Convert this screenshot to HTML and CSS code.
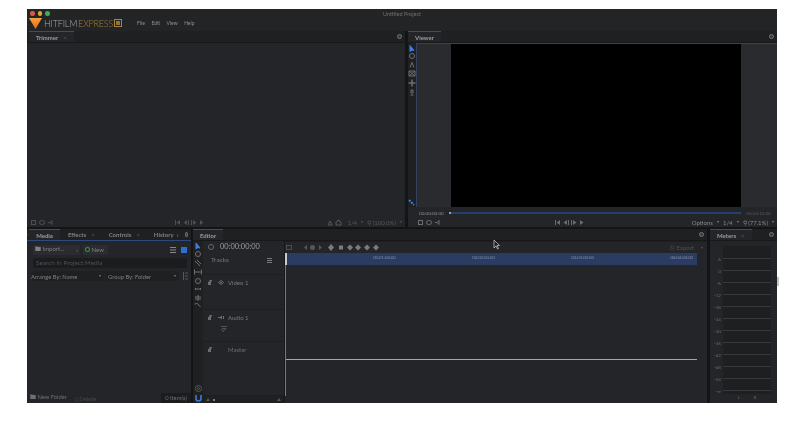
FILE: index.html
```html
<!DOCTYPE html>
<html lang="en">

<head>
    <meta charset="UTF-8">
    <meta name="viewport" content="width=device-width, initial-scale=1.0">
    <title>HitFilm Express</title>
    <link rel="stylesheet" href="styles.css">
</head>

<body>
    <div class="app">

        <header class="titlebar">
            <div class="title-row">
                <div class="lights"><i class="red"></i><i class="yellow"></i><i class="green"></i></div>
                <span class="project">Untitled Project</span>
            </div>
            <div class="brand-row">
                <svg class="logo" width="13" height="11" viewBox="0 0 13 11">
                    <defs>
                        <linearGradient id="logoFill" x1="0" y1="0" x2="0" y2="1">
                            <stop offset="0" stop-color="#f7a13c" />
                            <stop offset="1" stop-color="#e8661c" />
                        </linearGradient>
                    </defs>
                    <path d="M0 0H13L6.5 11Z" fill="url(#logoFill)" />
                </svg>
                <span class="brand">HITFILM</span><span class="brand express">EXPRESS</span>
                <svg class="brand-box" width="8" height="8" viewBox="0 0 8 8">
                    <rect x=".5" y=".5" width="7" height="7" fill="none" stroke="#a8853e" />
                    <rect x="2" y="2" width="4" height="4" fill="#8d7439" />
                </svg>
                <nav class="menu"><span>File</span><span>Edit</span><span>View</span><span>Help</span></nav>
            </div>
        </header>

        <div class="row-top">
            <section class="panel trimmer">
                <div class="tabs">
                    <div class="tab active">Trimmer <b>×</b></div>
                    <span class="gear"></span>
                </div>
                <div class="panel-body"></div>
                <div class="statusbar">
                    <div class="icons">
                        <svg width="24" height="7" viewBox="0 0 24 7">
                            <g fill="none" stroke="#4d4f52">
                                <rect x="1.500" y="1.500" width="4" height="4" />
                                <rect x="9.500" y="1.500" width="5" height="4" rx="2" />
                                <path d="M18 3.500h2l2-2v4l-2-2" />
                            </g>
                        </svg>
                    </div>
                    <div class="transport">
                        <svg width="30" height="7" viewBox="0 0 30 7" fill="#4d4f52">
                            <path d="M1 1h1v5H1zM6 1v5L2.500 3.500zM13 1v5L9.500 3.500zM14 1h1v5h-1zM17 1h1v5h-1zM19 1v5l3.500-2.500zM26 1v5l3.500-2.500z" />
                        </svg>
                    </div>
                    <div class="zoom-info">
                        <svg width="16" height="7" viewBox="0 0 16 7" fill="none" stroke="#55575a">
                            <path d="M1 6l2-4 2 4zM9 6V3h1l1-2h1l1 2h1v3z" />
                        </svg>
                        <span>1/4</span><span class="caret"></span><span class="zoom-value">⚲ (100.0%)</span><span class="caret"></span>
                    </div>
                </div>
            </section>

            <section class="panel viewer">
                <div class="tabs">
                    <div class="tab active">Viewer</div>
                    <span class="gear"></span>
                </div>
                <div class="viewer-main">
                    <div class="tool-col">
                        <svg width="8" height="52" viewBox="0 0 8 52" fill="none" stroke="#6c6e71">
                            <path d="M2 .5v6l2-1.500 2 .5z" fill="#3f7fe0" stroke="#3f7fe0" />
                            <circle cx="4" cy="11" r="2.500" />
                            <path d="M2 22.500l2-5 2 5" />
                            <path d="M1 26h6v5H1zM1 26l6 5M7 26l-6 5" />
                            <path d="M4 34.500v7M.5 38h7" stroke-width="1.500" />
                            <path d="M3 45h2v3H3zM2.500 50h3" />
                        </svg>
                        <svg class="fit-icon" width="7" height="7" viewBox="0 0 7 7">
                            <path d="M1 1l5 5" stroke="#3f7fe0" stroke-width="2" stroke-dasharray="2 1" />
                        </svg>
                    </div>
                    <div class="stage"><div class="picture"></div></div>
                </div>
                <div class="scrub">
                    <span class="time">00:00:00:00</span>
                    <span class="knob"></span>
                    <span class="scrub-bar"></span>
                    <span class="time end">00:04:10:00</span>
                </div>
                <div class="statusbar">
                    <div class="icons">
                        <svg width="24" height="7" viewBox="0 0 24 7">
                            <g fill="none" stroke="#6a6c6f">
                                <rect x="1.500" y="1.500" width="4" height="4" />
                                <rect x="9.500" y="1.500" width="5" height="4" rx="2" />
                                <path d="M18 3.500h2l2-2v4l-2-2" />
                            </g>
                        </svg>
                    </div>
                    <div class="transport">
                        <svg width="30" height="7" viewBox="0 0 30 7" fill="#6a6c6f">
                            <path d="M1 1h1v5H1zM6 1v5L2.500 3.500zM13 1v5L9.500 3.500zM14 1h1v5h-1zM17 1h1v5h-1zM19 1v5l3.500-2.500zM26 1v5l3.500-2.500z" />
                        </svg>
                    </div>
                    <div class="zoom-info bright">
                        <span>Options</span><span class="caret"></span><span>1/4</span><span class="caret"></span><span class="zoom-value">⚲ (77.1%)</span><span class="caret"></span>
                    </div>
                </div>
            </section>
        </div>

        <div class="row-bottom">
            <section class="panel media">
                <div class="tabs">
                    <span class="tab-arrow">‹</span>
                    <div class="tab active">Media</div>
                    <div class="tab">Effects <b>×</b></div>
                    <div class="tab">Controls <b>×</b></div>
                    <div class="tab">History <span class="tab-more">›</span></div>
                    <span class="gear"></span>
                </div>
                <div class="media-tools">
                    <div class="btn import"><span>🖿 Import...</span><span class="more">›</span></div>
                    <div class="btn new"><i class="new-dot"></i>New</div>
                    <div class="view-toggle">
                        <svg width="17" height="6" viewBox="0 0 17 6">
                            <path d="M0 0h6v1H0zM0 2.500h6v1H0zM0 5h6v1H0z" fill="#85878a" />
                            <rect x="11" y="0" width="6" height="6" fill="#2f6fd0" />
                        </svg>
                    </div>
                </div>
                <div class="search">Search In Project Media</div>
                <div class="arrange">
                    <div class="select first">Arrange By: Name<span class="caret"></span></div>
                    <div class="select second">Group By: Folder<span class="caret"></span></div>
                    <svg width="6" height="8" viewBox="0 0 6 8" fill="none" stroke="#55575a">
                        <path d="M1.500 0v8M3 1h3M3 4h3M3 7h3" />
                    </svg>
                </div>
                <div class="panel-body"></div>
                <div class="media-foot">
                    <span class="foot-item">🖿 New Folder</span>
                    <span class="foot-item dim">▯ Delete</span>
                    <span class="count">0 Item(s)</span>
                </div>
            </section>

            <section class="panel editor">
                <div class="tabs">
                    <div class="tab active">Editor</div>
                    <span class="gear"></span>
                </div>
                <div class="editor-main">
                    <div class="edit-tools">
                        <svg width="8" height="66" viewBox="0 0 8 66" fill="none" stroke="#6c6e71">
                            <path d="M2 0v6l2-1.500 2 .5z" fill="#3f7fe0" stroke="#3f7fe0" />
                            <circle cx="4" cy="11" r="2.500" />
                            <path d="M1 18l5 5M3 17l4 4" />
                            <path d="M.5 26.500v5M7.500 26.500v5M1 29h6" />
                            <circle cx="4" cy="38" r="2.500" />
                            <path d="M1 46h6M1.500 45v2M6.500 45v2" />
                            <path d="M1 54h6M4 52v6M1 56h6" />
                            <path d="M.5 61l3-.5 3 3.500" />
                        </svg>
                        <div class="edit-tools-foot">
                            <svg width="7" height="7" viewBox="0 0 7 7" fill="none" stroke="#55575a">
                                <circle cx="3.500" cy="3.500" r="3" />
                                <circle cx="3.500" cy="3.500" r="1" />
                            </svg>
                            <svg width="7" height="7" viewBox="0 0 7 7" fill="none" stroke="#3f7fe0" stroke-width="1.500">
                                <path d="M1 0v3.500a2.500 2.500 0 0 0 5 0V0" />
                            </svg>
                        </div>
                    </div>
                    <div class="track-col">
                        <div class="clock-row"><span class="clock"></span>00:00:00:00</div>
                        <div class="tracks-head">Tracks<span class="hamburger"></span></div>
                        <div class="track video">
                            <div class="track-line">
                                <svg class="lock" width="6" height="5" viewBox="0 0 6 5" fill="#6a6c6f"><path d="M0 2h3v3H0zM3 1h1V0H2v1h-.500V0H1v2h3z" /></svg>
                                <svg class="kind" width="6" height="5" viewBox="0 0 6 5" fill="none" stroke="#6a6c6f"><path d="M.500 2.500L3 .500l2.500 2L3 4.500z" /><circle cx="3" cy="2.500" r=".5" /></svg>
                                Video 1
                            </div>
                        </div>
                        <div class="track audio">
                            <div class="track-line">
                                <svg class="lock" width="6" height="5" viewBox="0 0 6 5" fill="#6a6c6f"><path d="M0 2h3v3H0zM3 1h1V0H2v1h-.500V0H1v2h3z" /></svg>
                                <svg class="kind" width="6" height="5" viewBox="0 0 6 5" fill="#6a6c6f"><path d="M0 2h2L4 .500v4L2 3H0zM5 1h1v3H5z" /></svg>
                                Audio 1
                            </div>
                            <svg class="fx" width="6" height="6" viewBox="0 0 6 6" fill="none" stroke="#5c5e61" stroke-width=".8"><path d="M0 .500h6M1 2.500h4M0 3l3 2.500M5 2.500L2 5.500" /></svg>
                        </div>
                        <div class="track master">
                            <div class="track-line">
                                <svg class="lock" width="6" height="5" viewBox="0 0 6 5" fill="#6a6c6f"><path d="M0 2h3v3H0zM3 1h1V0H2v1h-.500V0H1v2h3z" /></svg>
                                <span class="kind-gap"></span>
                                Master
                            </div>
                        </div>
                        <div class="scroll-foot"><i class="tri"></i><i class="dot"></i><i class="tri right"></i></div>
                    </div>
                    <div class="timeline">
                        <div class="key-row">
                            <div class="keys">
                                <svg width="94" height="7" viewBox="0 0 94 7" fill="#55575a">
                                    <rect x="1.500" y="1.500" width="5" height="4" fill="none" stroke="#4a4c4f" />
                                    <path d="M22 1v5l-3-2.500zM23 1v5M30 3.500a2.500 2.500 0 1 1-5 0 2.500 2.500 0 0 1 5 0M33 1v5M34 1v5l3-2.500z" />
                                    <path d="M46 0l3 3.500L46 7l-3-3.500zM54 1.500h4v4h-4zM65 .500l3 3-3 3-3-3zM73 .500l3 3-3 3-3-3zM82 .500l3 3-3 3-3-3zM91 .500l3 3-3 3-3-3z" fill="#797b7e" />
                                </svg>
                            </div>
                            <div class="export">⎘ Export<span class="caret"></span></div>
                        </div>
                        <div class="ruler">
                            <span>00:01:00:00</span><span>00:02:00:00</span><span>00:03:00:00</span><span>00:04:00:00</span>
                        </div>
                        <div class="lanes">
                            <div class="lane-top"></div>
                            <div class="lane-master"></div>
                        </div>
                    </div>
                </div>
            </section>

            <section class="panel meters">
                <div class="tabs">
                    <div class="tab active">Meters <b>×</b></div>
                    <span class="gear"></span>
                </div>
                <div class="meter-grid">
                    <div class="meter-head"></div>
                    <div class="meter-line"><span>6</span></div>
                    <div class="meter-line"><span>0</span></div>
                    <div class="meter-line"><span>-6</span></div>
                    <div class="meter-line"><span>-12</span></div>
                    <div class="meter-line"><span>-18</span></div>
                    <div class="meter-line"><span>-24</span></div>
                    <div class="meter-line"><span>-30</span></div>
                    <div class="meter-line"><span>-36</span></div>
                    <div class="meter-line"><span>-42</span></div>
                    <div class="meter-line"><span>-48</span></div>
                    <div class="meter-line"><span>-54</span></div>
                    <div class="meter-line last"><span>-∞</span></div>
                    <div class="meter-lr"><span>L</span><span>R</span></div>
                </div>
            </section>
        </div>
    </div>
    <span class="edge-tick"></span>
    <svg class="cursor" width="7" height="10" viewBox="0 0 7 10">
        <path d="M1 0v8l2-2 1.500 3 1-.5L4 5.500h2.500z" fill="#222" stroke="#ccc" stroke-width=".7" />
    </svg>
</body>

</html>
```

FILE: styles.css
```css
body {
    margin: 0;
    padding: 9px 0 0 27px;
    background-color: #fff;
    font-family: Lato, 'Open Sans', sans-serif;
    overflow: hidden;
}

.app {
    width: 750px;
    height: 394px;
    display: flex;
    flex-direction: column;
    background-color: #131416;
    color: #8b8d90;
    font-size: 5.5px;
    filter: blur(0.5px);
}

/* title bar */
.titlebar {
    height: 22px;
    background-color: #232426;
}

.title-row {
    height: 7px;
    display: grid;
    grid-template-columns: 1fr auto 1fr;
    align-items: center;
    padding-top: 1px;
}

.lights {
    display: flex;
    gap: 3px;
    padding-left: 3px;
}

.lights i {
    width: 4.5px;
    height: 4.5px;
    border-radius: 50%;
}

.lights .red { background-color: #e0564c; }
.lights .yellow { background-color: #e2a92e; }
.lights .green { background-color: #3fb049; }

.project {
    color: #6f7174;
    font-size: 5.5px;
}

.brand-row {
    display: flex;
    align-items: center;
    height: 12px;
    padding-left: 2px;
}

.logo {
    margin-right: 2px;
}

.brand {
    font-size: 9px;
    font-weight: 300;
    color: #a9abad;
    letter-spacing: -0.2px;
}

.brand.express {
    color: #a5803a;
    margin-left: 1px;
}

.brand-box {
    margin-left: 1px;
}

.menu {
    display: flex;
    gap: 6.5px;
    margin-left: 15px;
    font-size: 5px;
    color: #8e9093;
}

/* panels */
.row-top {
    height: 196px;
    display: flex;
    gap: 3px;
}

.row-bottom {
    flex: 1;
    display: flex;
    gap: 2px;
    margin-top: 2px;
}

.panel {
    display: flex;
    flex-direction: column;
    background-color: #242528;
}

.trimmer { width: 378px; }
.viewer { flex: 1; }
.media { width: 164px; }
.editor { width: 514px; margin-right: 1px; }
.meters { flex: 1; }

.tabs {
    height: 12px;
    flex: none;
    display: flex;
    align-items: stretch;
    background-color: #1f2022;
    border-bottom: 1px solid #17181a;
    box-sizing: border-box;
}

.tab {
    display: flex;
    align-items: center;
    padding: 0 7px 0 7px;
    font-size: 6px;
    font-weight: 700;
    color: #7f8184;
    white-space: nowrap;
}

.trimmer .tab { margin-left: 2px; }

.tab b {
    margin-left: 5px;
    font-weight: 400;
    color: #55575a;
}

.tab.active {
    background-color: #242528;
    border-top: 1px solid #2e4f85;
    color: #9a9c9f;
}

.gear {
    width: 3px;
    height: 3px;
    margin: auto 3px auto auto;
    border-radius: 50%;
    border: 1px solid #707275;
    background-color: #3a3b3e;
}

.panel-body {
    flex: 1;
}

.statusbar {
    height: 10px;
    flex: none;
    display: grid;
    grid-template-columns: 1fr auto 1fr;
    align-items: center;
    padding: 0 3px;
    color: #55575a;
    font-size: 6px;
}

.viewer .statusbar {
    padding-left: 9px;
}

.statusbar svg {
    display: block;
}

.transport {
    margin-right: 54px;
}

.zoom-info {
    display: flex;
    align-items: center;
    justify-content: flex-end;
    gap: 4px;
}

.zoom-info.bright {
    color: #84868a;
}

.caret {
    display: inline-block;
    margin-left: auto;
    border-left: 1.5px solid transparent;
    border-right: 1.5px solid transparent;
    border-top: 2px solid currentColor;
}

.zoom-info .caret {
    margin-left: 0;
}

/* viewer */
.viewer-main {
    flex: 1;
    display: flex;
    min-height: 0;
}

.tool-col {
    width: 8px;
    flex: none;
    display: flex;
    flex-direction: column;
    justify-content: space-between;
    padding: 2px 0 1px;
    box-sizing: border-box;
    background-color: #1f2022;
}

.stage {
    flex: 1;
    display: flex;
    padding-left: 34px;
    border-top: 1px solid #33435e;
    border-left: 1px solid #33435e;
    background-color: #2a2b2e;
}

.picture {
    width: 290px;
    background-color: #000;
}

.scrub {
    height: 10px;
    flex: none;
    display: flex;
    align-items: center;
    padding: 2px 6px 0 11px;
    box-sizing: border-box;
    font-size: 4.6px;
}

.time {
    color: #8c8e91;
}

.time.end {
    color: #55575a;
}

.knob {
    width: 2.500px;
    height: 2.500px;
    margin: 0 0 0 5px;
    border-radius: 50%;
    background-color: #c8c8c8;
}

.scrub-bar {
    flex: 1;
    height: 2px;
    margin-right: 5px;
    background-color: #26406e;
}

/* media */
.tab-arrow {
    width: 11px;
    text-align: center;
    line-height: 10px;
    color: #55575a;
}

.media .tabs {
    border-bottom: 1px solid #2c4a7d;
}

.media .tab {
    padding: 0 7px 0 6px;
}

.media .tab.active {
    margin-right: 1px;
    padding: 0 7px;
}

.media .tab + .tab {
    padding: 0 7px 0 7px;
}

.tab-more {
    margin-left: 3px;
}

.media-tools {
    height: 17px;
    flex: none;
    display: flex;
    align-items: center;
    padding: 0 3px 0 6px;
    box-sizing: border-box;
}

.btn {
    height: 10px;
    display: flex;
    align-items: center;
    background-color: #2b2c2f;
    color: #7e8083;
    font-size: 6px;
}

.import {
    width: 47px;
    padding: 0 2px;
    box-sizing: border-box;
    justify-content: space-between;
}

.new {
    width: 25px;
    margin-left: 3px;
    padding-left: 2px;
    box-sizing: border-box;
    gap: 2px;
}

.new-dot {
    width: 2.500px;
    height: 2.500px;
    border-radius: 50%;
    border: 1px solid #35a345;
}

.view-toggle {
    margin-left: auto;
    padding-right: 1px;
}

.view-toggle svg {
    display: block;
}

.search {
    height: 10px;
    flex: none;
    margin: 0 4px 0 6px;
    padding-left: 3px;
    line-height: 10px;
    font-size: 6.4px;
    background-color: #1b1c1e;
    color: #4f5154;
}

.arrange {
    height: 10px;
    flex: none;
    margin-top: 3px;
    display: flex;
    align-items: center;
    padding-left: 4px;
    font-size: 5.800px;
}

.select {
    height: 10px;
    display: flex;
    align-items: center;
    background-color: #1f2022;
    color: #7e8083;
}

.select.first { width: 73px; }
.select.second { width: 74px; margin-left: 1px; padding-left: 3px; box-sizing: border-box; }

.select .caret {
    margin-right: 3px;
}

.arrange svg {
    margin-left: 3px;
}

.media-foot {
    height: 10px;
    flex: none;
    display: flex;
    align-items: center;
    padding-left: 3px;
    font-size: 5.800px;
    color: #6e7073;
}

.foot-item.dim {
    margin-left: 8px;
    color: #46484b;
}

.count {
    margin-left: auto;
    width: 30px;
    height: 10px;
    line-height: 10px;
    text-align: center;
    background-color: #1b1c1e;
}

/* editor */
.editor-main {
    flex: 1;
    display: flex;
    min-height: 0;
}

.edit-tools {
    width: 10px;
    flex: none;
    display: flex;
    flex-direction: column;
    justify-content: space-between;
    align-items: center;
    padding: 2px 0 0;
    box-sizing: border-box;
    background-color: #1f2022;
}

.edit-tools-foot {
    display: flex;
    flex-direction: column;
    gap: 3px;
    padding-bottom: 1px;
}

.edit-tools svg {
    display: block;
}

.track-col {
    width: 81px;
    flex: none;
    display: flex;
    flex-direction: column;
    border-right: 1px solid #17181a;
    color: #77797c;
    font-size: 6px;
}

.clock-row {
    height: 12px;
    flex: none;
    display: flex;
    align-items: center;
    padding: 0 0 1px 5px;
    box-sizing: border-box;
    gap: 6px;
    font-size: 7.4px;
    color: #9a9c9f;
}

.clock {
    width: 4px;
    height: 4px;
    border-radius: 50%;
    border: 1px solid #66686b;
}

.tracks-head {
    height: 22px;
    flex: none;
    display: flex;
    align-items: flex-start;
    justify-content: space-between;
    box-sizing: border-box;
    padding: 3px 12px 0 8px;
    font-size: 6.500px;
    border-bottom: 1px solid #1d1e20;
}

.hamburger {
    width: 5px;
    height: 5px;
    margin-top: 2px;
    background: repeating-linear-gradient(#77797c 0 1px, transparent 1px 2px);
}

.track {
    padding: 4px 0 0 5px;
    box-sizing: border-box;
    border-bottom: 1px solid #1d1e20;
}

.track-line {
    display: flex;
    align-items: center;
    gap: 4px;
}

.kind-gap {
    width: 6px;
}

.fx {
    display: block;
    margin: 5px 0 0 13px;
}

.track.video { height: 35px; }
.track.audio { height: 32px; }
.track.master { flex: 1; color: #6a6c6f; }

.scroll-foot {
    height: 7px;
    flex: none;
    display: flex;
    align-items: center;
    padding: 0 3px;
    gap: 3px;
    background-color: #1f2022;
}

.scroll-foot .dot {
    width: 2px;
    height: 2px;
    background-color: #9a9c9f;
    border-radius: 50%;
}

.scroll-foot .tri {
    width: 0;
    border-left: 2px solid transparent;
    border-right: 2px solid transparent;
    border-bottom: 3px solid #55575a;
}

.scroll-foot .tri.right {
    margin-left: auto;
}

.timeline {
    flex: 1;
    display: flex;
    flex-direction: column;
    min-width: 0;
}

.key-row {
    height: 12px;
    flex: none;
    display: flex;
    align-items: center;
    justify-content: space-between;
    padding: 0 4px 0 0;
    color: #4f5154;
    font-size: 6px;
    border-top: 1px solid #1d1e20;
    box-sizing: border-box;
}

.keys svg {
    display: block;
}

.export {
    display: flex;
    align-items: center;
    gap: 7px;
}

.ruler {
    height: 12px;
    flex: none;
    margin-right: 10px;
    display: flex;
    justify-content: flex-end;
    gap: 76.500px;
    padding: 2px 4px 0 0;
    box-sizing: border-box;
    background-color: #2a3c62;
    border-left: 2px solid #c9c9c9;
    color: #8791a8;
    font-size: 4.200px;
}

.lanes {
    flex: 1;
    margin: 0 10px 7px 0;
    display: flex;
    flex-direction: column;
    border-left: 1px solid #77797c;
}

.lane-top {
    height: 94px;
    flex: none;
    border-bottom: 1px solid #a4a5a6;
}

.lane-master {
    flex: 1;
}

/* meters */
.meter-grid {
    flex: 1;
    display: flex;
    flex-direction: column;
    padding: 5px 0 0;
    color: #66686b;
    font-size: 4.600px;
}

.meter-head {
    height: 12px;
    flex: none;
    margin: 0 6px 0 13px;
    background-color: #1e1f21;
}

.meter-line {
    height: 12px;
    flex: none;
    position: relative;
    margin: 0 6px 0 13px;
    box-sizing: border-box;
    border-top: 1px solid #38393c;
    background-color: #1e1f21;
}

.meter-line.last {
    height: 4px;
}

.meter-line span {
    position: absolute;
    right: 100%;
    top: -3px;
    padding-right: 2px;
    white-space: nowrap;
}

.meter-lr {
    display: flex;
    justify-content: space-around;
    margin: 0 6px 0 13px;
    padding: 0 8px;
}

.edge-tick {
    position: absolute;
    left: 777px;
    top: 277px;
    width: 2px;
    height: 9px;
    background-color: #c4c4c4;
}

.cursor {
    position: absolute;
    left: 493px;
    top: 240px;
}
```
